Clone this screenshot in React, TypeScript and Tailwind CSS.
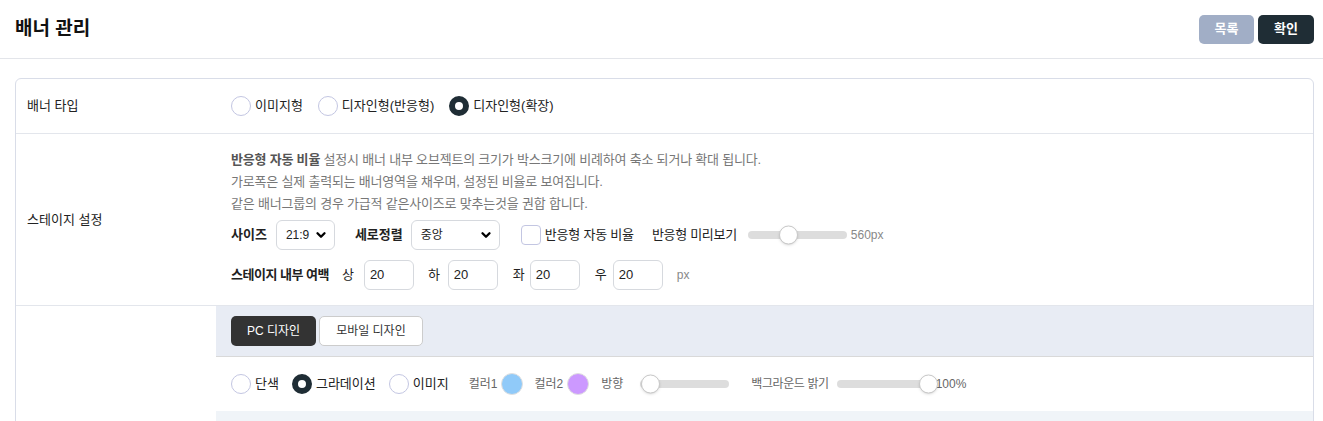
import React from 'react';
import { ChevronDown } from 'lucide-react';

const FONT = { fontFamily: '"Liberation Sans", "Noto Sans CJK KR", sans-serif' };

const Radio = ({ checked, label }: { checked?: boolean; label: string }) => (
    <label className="flex items-center gap-1 text-[13px] text-[#222]">
        <span
            className={
                checked
                    ? 'w-5 h-5 rounded-full border-[6px] border-[#1f2d35] bg-white'
                    : 'w-5 h-5 rounded-full border border-[#c3c6e2] bg-white'
            }
        />
        {label}
    </label>
);

const Select = ({ value, width }: { value: string; width: string }) => (
    <div className={`flex items-center justify-between h-[30px] ${width} pl-[9px] pr-[6px] border border-[#d6d9de] rounded-md bg-white text-[12px] text-[#222]`}>
        <span>{value}</span>
        <ChevronDown className="w-3.5 h-3.5 text-black" strokeWidth={4} />
    </div>
);

const NumInput = ({ value }: { value: string }) => (
    <div className="flex items-center h-[30px] w-[50px] px-[5px] border border-[#d6d9de] rounded-md bg-white text-[13px] text-[#222]">
        {value}
    </div>
);

const Slider = ({ width, pos }: { width: string; pos: string }) => (
    <div className={`relative h-[8px] ${width} rounded-full bg-[#dddddd]`}>
        <span className={`absolute top-1/2 -translate-y-1/2 ${pos} w-[19px] h-[19px] rounded-full bg-white border border-[#c8c8c8] shadow-sm`} />
    </div>
);

export default function App() {
    return (
        <div className="min-h-[421px] bg-white" style={FONT}>
            {/* Header */}
            <div className="flex items-center justify-between h-[59px] pl-[15px] pr-[9px] border-b border-[#e3e5ea]">
                <h1 className="text-[19px] font-bold text-[#111]">배너 관리</h1>
                <div className="flex items-center gap-1">
                    <button className="h-[29px] w-[55px] rounded-[5px] bg-[#a1aec6] text-white text-[13px] font-bold">목록</button>
                    <button className="h-[29px] w-[56px] rounded-[5px] bg-[#1f2d35] text-white text-[13px] font-bold">확인</button>
                </div>
            </div>

            <div className="pl-[15px] pr-[9px] pt-[19px]">
                <div className="border border-[#d9dde8] rounded-md overflow-hidden">
                    {/* 배너 타입 */}
                    <div className="flex border-b border-[#e3e6ec]">
                        <div className="w-[200px] shrink-0 flex items-center pl-[11px] text-[13px] text-[#222]">배너 타입</div>
                        <div className="flex items-center gap-[15px] h-[54px] pl-[15px]">
                            <Radio label="이미지형" />
                            <Radio label="디자인형(반응형)" />
                            <Radio label="디자인형(확장)" checked />
                        </div>
                    </div>

                    {/* 스테이지 설정 */}
                    <div className="flex border-b border-[#e3e6ec]">
                        <div className="w-[200px] shrink-0 flex items-center pl-[11px] text-[13px] text-[#222]">스테이지 설정</div>
                        <div className="flex flex-col pl-[15px] pt-[15px] pb-[15px]">
                            <div className="text-[13px] leading-[22px] tracking-[-0.2px] text-[#777]">
                                <p><b className="text-[#555]">반응형 자동 비율</b> 설정시 배너 내부 오브젝트의 크기가 박스크기에 비례하여 축소 되거나 확대 됩니다.</p>
                                <p>가로폭은 실제 출력되는 배너영역을 채우며, 설정된 비율로 보여집니다.</p>
                                <p>같은 배너그룹의 경우 가급적 같은사이즈로 맞추는것을 권합 합니다.</p>
                            </div>
                            <div className="flex items-center mt-[5px] text-[13px] text-[#222]">
                                <span className="font-bold mr-[9px]">사이즈</span>
                                <Select value="21:9" width="w-[59px]" />
                                <span className="font-bold ml-[20px] mr-[8px]">세로정렬</span>
                                <Select value="중앙" width="w-[89px]" />
                                <span className="ml-[21px] w-5 h-5 rounded border border-[#c3c6e2] bg-white" />
                                <span className="ml-1 tracking-[-0.2px]">반응형 자동 비율</span>
                                <span className="ml-[18px] tracking-[-0.3px]">반응형 미리보기</span>
                                <div className="ml-[11px]">
                                    <Slider width="w-[99px]" pos="left-[31px]" />
                                </div>
                                <span className="ml-[4px] text-[12px] text-[#888]">560px</span>
                            </div>
                            <div className="flex items-center mt-[10px] text-[13px] text-[#222]">
                                <span className="font-bold tracking-[-0.5px] mr-[13px]">스테이지 내부 여백</span>
                                <span className="mr-[10px]">상</span>
                                <NumInput value="20" />
                                <span className="ml-[14px] mr-[8px]">하</span>
                                <NumInput value="20" />
                                <span className="ml-[15px] mr-[5px]">좌</span>
                                <NumInput value="20" />
                                <span className="ml-[15px] mr-[6px]">우</span>
                                <NumInput value="20" />
                                <span className="ml-[14px] text-[12px] text-[#888]">px</span>
                            </div>
                        </div>
                    </div>

                    {/* 디자인 */}
                    <div className="flex">
                        <div className="w-[200px] shrink-0" />
                        <div className="flex-1 flex flex-col">
                            <div className="flex items-center gap-[3px] h-[51px] pl-[15px] bg-[#e8ecf4] border-b border-[#d9d9d9]">
                                <button className="h-[30px] px-[16px] rounded-[5px] bg-[#333333] text-white text-[12px]">PC 디자인</button>
                                <button className="h-[30px] px-[16px] rounded-[5px] bg-white border border-[#cccccc] text-[#333] text-[12px]">모바일 디자인</button>
                            </div>
                            <div className="flex items-center h-[54px] pl-[15px]">
                                <Radio label="단색" />
                                <div className="ml-[13px]"><Radio label="그라데이션" checked /></div>
                                <div className="ml-[13px]"><Radio label="이미지" /></div>
                                <span className="ml-[20px] text-[12px] text-[#666]">컬러1</span>
                                <span className="ml-[4px] w-[22px] h-[22px] rounded-full bg-[#90caf9] border border-[#e0e0e0]" />
                                <span className="ml-[11px] text-[12px] text-[#666]">컬러2</span>
                                <span className="ml-[4px] w-[22px] h-[22px] rounded-full bg-[#cc99ff] border border-[#e0e0e0]" />
                                <span className="ml-[12px] text-[12px] text-[#666]">방향</span>
                                <div className="ml-[17px]">
                                    <Slider width="w-[89px]" pos="left-[1px]" />
                                </div>
                                <span className="ml-[22px] text-[12px] tracking-[-0.4px] text-[#666]">백그라운드 밝기</span>
                                <div className="ml-[8px]">
                                    <Slider width="w-[98px]" pos="left-[82px]" />
                                </div>
                                <span className="ml-[1px] text-[12px] text-[#666]">100%</span>
                            </div>
                            <div className="h-[40px] bg-[#f0f4f8]" />
                        </div>
                    </div>
                </div>
            </div>
        </div>
    );
}
